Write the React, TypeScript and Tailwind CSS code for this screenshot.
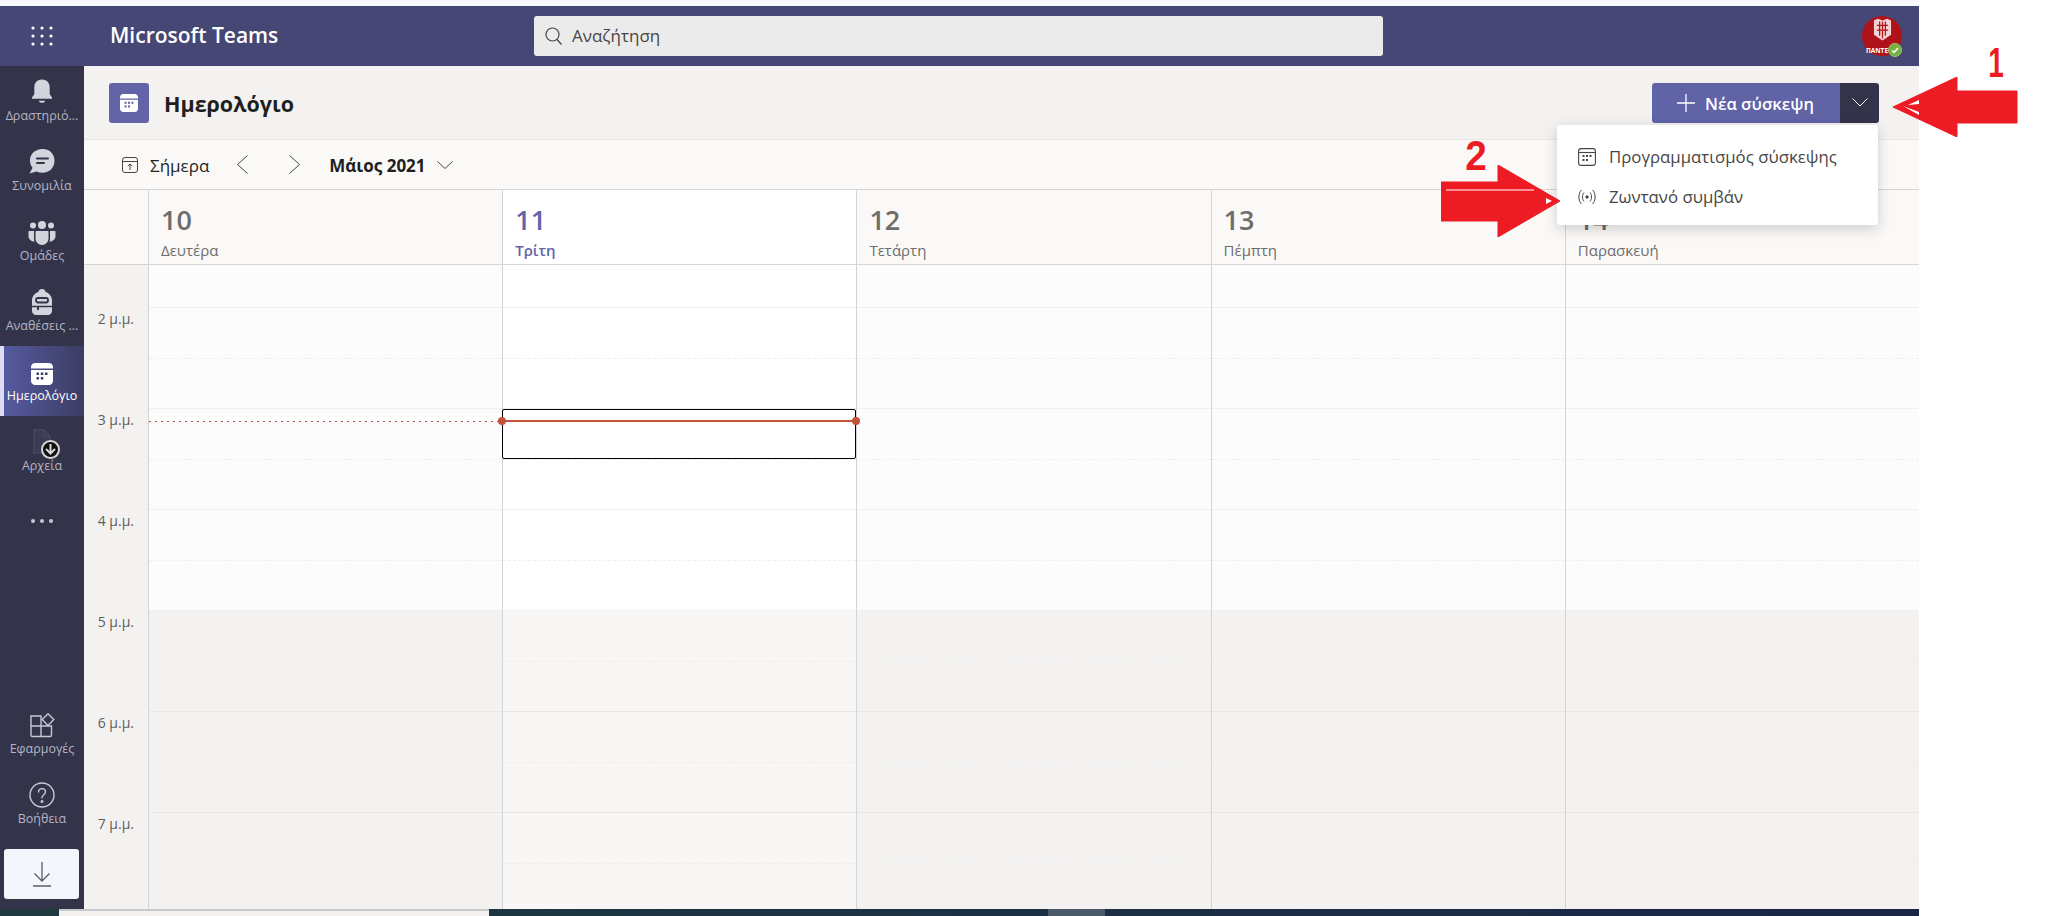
import React from "react";

// Half hour rows of the week grid, the first one is cut off by the day header
const ROWS = [0, 1, 2, 3, 4, 5, 6, 7, 8, 9, 10, 11, 12];
const HOURS = ["2 μ.μ.", "3 μ.μ.", "4 μ.μ.", "5 μ.μ.", "6 μ.μ.", "7 μ.μ."];
const DAYS = [
  { num: "10", name: "Δευτέρα" },
  { num: "11", name: "Τρίτη", today: true },
  { num: "12", name: "Τετάρτη" },
  { num: "13", name: "Πέμπτη" },
  { num: "14", name: "Παρασκευή" },
];

function BellIcon() {
  return (
    <svg width="22" height="27" viewBox="0 0 24 28" fill="#d4d4dc">
      <path d="M12 1C6 1 3.600 5 3.600 10v7L1 20.500V22h22v-1.500L20.400 17v-7C20.400 5 18 1 12 1z" />
      <path d="M8.500 24h7c-.6 1.600-2 2.400-3.500 2.400S9.100 25.600 8.500 24z" />
    </svg>
  );
}

function ChatIcon() {
  return (
    <svg width="28" height="27" viewBox="0 0 28 27">
      <path d="M14.500 1C7 1 2 6 2 12.500c0 2.800 1 5.300 2.500 7.200L1.500 25.500l7-2c1.800.8 3.800 1.200 6 1.200 7 0 12-5 12-12S21.500 1 14.500 1z" fill="#d4d4dc" />
      <path d="M9 10.500h11M9 15h7" stroke="#33344a" strokeWidth="2" strokeLinecap="round" />
    </svg>
  );
}

function TeamsIcon() {
  return (
    <svg width="28" height="24" viewBox="0 0 28 24" fill="#d4d4dc">
      <circle cx="14" cy="4" r="4" />
      <circle cx="5" cy="4.500" r="3" />
      <circle cx="23" cy="4.500" r="3" />
      <path d="M8.500 10h11c.5 0 1 .5 1 1v6.500c0 3.500-3 6.500-6.500 6.500s-6.500-3-6.500-6.500V11c0-.5.500-1 1-1z" />
      <path d="M1 10h5v8c0 1 .2 2 .5 2.800C3 20.500.5 18 .5 15v-4.500c0-.3.200-.5.500-.5zM27 10h-5v8c0 1-.2 2-.5 2.800 3.500-.3 6-2.800 6-5.800v-4.500c0-.3-.2-.5-.5-.5z" />
    </svg>
  );
}

function BackpackIcon() {
  return (
    <svg width="22" height="26" viewBox="0 0 22 26">
      <path d="M11 0c2 0 3.300 1.200 3.600 3C18.500 4.300 21 7.500 21 11.500V22c0 2.200-1.800 4-4 4H5c-2.200 0-4-1.800-4-4V11.500C1 7.500 3.500 4.300 7.400 3 7.700 1.200 9 0 11 0z" fill="#d4d4dc" />
      <rect x="5" y="9" width="12" height="4.500" rx="2" fill="none" stroke="#33344a" strokeWidth="1.800" />
      <path d="M1 17.500h20" stroke="#33344a" strokeWidth="1.500" />
      <path d="M7 17.500v3.500" stroke="#33344a" strokeWidth="2" />
    </svg>
  );
}

function CalendarFilled({ size, fill, dots }: { size: number; fill: string; dots: string }) {
  return (
    <svg width={size} height={size} viewBox="0 0 22 22">
      <path d="M4 0h14c2.200 0 4 1.800 4 4v1.500H0V4c0-2.200 1.800-4 4-4z" fill={fill} />
      <path d="M0 7h22v11c0 2.200-1.800 4-4 4H4c-2.200 0-4-1.800-4-4V7z" fill={fill} />
      <g fill={dots}>
        <rect x="5.500" y="9.500" width="2.500" height="2.500" />
        <rect x="9.800" y="9.500" width="2.500" height="2.500" />
        <rect x="14" y="9.500" width="2.500" height="2.500" />
        <rect x="5.500" y="14" width="2.500" height="2.500" />
        <rect x="9.800" y="14" width="2.500" height="2.500" />
      </g>
    </svg>
  );
}

function FilesIcon() {
  return (
    <div className="relative ml-[10px] w-[30px] h-[26px]">
      <svg width="20" height="25" viewBox="0 0 20 25" fill="none" stroke="#474860" strokeWidth="1.500">
        <path d="M2 1h10l6 6.500V24H2z" fill="#3b3c52" />
        <path d="M12 1v6.500h6" />
      </svg>
      <div className="absolute left-[9px] top-[11px] w-[19px] h-[19px] rounded-full bg-[#111] border-2 border-[#d8d8d8] flex items-center justify-center">
        <svg width="11" height="11" viewBox="0 0 11 11" fill="none" stroke="#d8d8d8" strokeWidth="2">
          <path d="M5.500 0v9M1 5l4.500 4.500L10 5" />
        </svg>
      </div>
    </div>
  );
}

function AppsIcon() {
  return (
    <svg width="25" height="25" viewBox="0 0 25 25" fill="none" stroke="#c8c8d2" strokeWidth="1.400">
      <path d="M1 3h10v10H1zM1 13v9c0 1 .5 1.500 1.500 1.500H11V13zM11 13h10.500v9c0 1-.5 1.500-1.500 1.500h-9z" />
      <path d="M18 .8l5.800 5.800-5.800 5.800-5.800-5.800z" />
    </svg>
  );
}

function HelpIcon() {
  return (
    <svg width="26" height="26" viewBox="0 0 26 26" fill="none" stroke="#c8c8d2" strokeWidth="1.400">
      <circle cx="13" cy="13" r="12" />
      <path d="M9.500 10c0-2 1.600-3.400 3.500-3.400s3.500 1.300 3.500 3.200c0 3-3.500 3-3.500 6" strokeLinecap="round" />
      <circle cx="13" cy="19.500" r=".8" fill="#c8c8d2" />
    </svg>
  );
}

function NavItem({ label, active, children }: { label: string; active?: boolean; children: React.ReactNode }) {
  return (
    <div
      className={
        active
          ? "h-[70px] flex flex-col items-center justify-end pb-[12px] gap-[3px] border-l-4 border-[#dcdcf5] pr-1 bg-gradient-to-r from-[#565aa0] to-[#3c3d62] text-white"
          : "h-[70px] flex flex-col items-center justify-end pb-[12px] gap-[3px] text-[#b4b4c2]"
      }
    >
      <div className="flex items-end justify-center h-[30px]">{children}</div>
      <span className="text-[12.5px] leading-[16px] whitespace-nowrap">{label}</span>
    </div>
  );
}

function Sidebar() {
  return (
    <aside className="w-[84px] shrink-0 bg-[#33344a] flex flex-col">
      <NavItem label="Δραστηριό..."><BellIcon /></NavItem>
      <NavItem label="Συνομιλία"><ChatIcon /></NavItem>
      <NavItem label="Ομάδες"><TeamsIcon /></NavItem>
      <NavItem label="Αναθέσεις ..."><BackpackIcon /></NavItem>
      <NavItem label="Ημερολόγιο" active><CalendarFilled size={22} fill="#ffffff" dots="#3c3d62" /></NavItem>
      <NavItem label="Αρχεία"><FilesIcon /></NavItem>
      <div className="h-[70px] flex justify-center pt-[33px] gap-[5px]">
        <span className="w-[4px] h-[4px] rounded-full bg-[#c8c8d2]" />
        <span className="w-[4px] h-[4px] rounded-full bg-[#c8c8d2]" />
        <span className="w-[4px] h-[4px] rounded-full bg-[#c8c8d2]" />
      </div>
      <div className="mt-auto">
        <NavItem label="Εφαρμογές"><AppsIcon /></NavItem>
        <NavItem label="Βοήθεια"><HelpIcon /></NavItem>
        <div className="mx-[4px] mt-[10px] mb-[10px] w-[75px] h-[50px] rounded-[3px] bg-[#f5f5fc] flex items-center justify-center">
          <svg width="20" height="26" viewBox="0 0 20 26" fill="none" stroke="#5c5c66" strokeWidth="1.300">
            <path d="M10 1v19M2.500 12.500L10 20l7.500-7.500M1 25h18" />
          </svg>
        </div>
      </div>
    </aside>
  );
}

function TopBar() {
  return (
    <header className="h-[60px] shrink-0 bg-[#464775] flex items-center">
      <div className="w-[84px] h-full flex items-center justify-center">
        <svg width="22" height="20" viewBox="0 0 22 20" fill="#ffffff">
          {[2, 11, 20].map((x) =>
            [2, 10, 18].map((y) => <circle key={`${x}-${y}`} cx={x} cy={y} r="1.600" />)
          )}
        </svg>
      </div>
      <span className="ml-[26px] w-[424px] text-[21px] font-semibold text-white">Microsoft Teams</span>
      <div className="w-[849px] h-[40px] rounded-[3px] bg-[#ebebeb] flex items-center pl-[11px] gap-[10px] text-[17px] text-[#484644]">
        <svg width="17" height="18" viewBox="0 0 17 18" fill="none" stroke="#484644" strokeWidth="1.200">
          <circle cx="7.500" cy="7.500" r="6.500" />
          <path d="M12 12.500l4.500 5" />
        </svg>
        <span>Αναζήτηση</span>
      </div>
      <div className="ml-auto mr-[17px] relative w-[40px] h-[40px] rounded-full bg-[#b01219] flex flex-col items-center">
        <svg width="19" height="27" viewBox="0 0 20 25" className="mt-[1px]">
          <path d="M1 2l4-2 5 2 5-2 4 2v15l-9 6-9-6z" fill="#f3d4d4" />
          <path d="M4 7h12M4 12h12M7 3v15M13 3v15M10 3v18" stroke="#b01219" strokeWidth="1.300" />
        </svg>
        <span className="absolute left-[4px] top-[30px] text-[6.5px] leading-[9px] font-bold text-white">ΠΑΝΤΕ</span>
        <div className="absolute left-[26px] top-[27px] w-[14px] h-[14px] rounded-full bg-[#76b041] border border-[#9ac76b] flex items-center justify-center">
          <svg width="8" height="7" viewBox="0 0 8 7" fill="none" stroke="#fff" strokeWidth="1.500">
            <path d="M1 3.500L3 5.500 7 1" />
          </svg>
        </div>
      </div>
    </header>
  );
}

function PageHeader() {
  return (
    <div className="h-[74px] shrink-0 bg-[#f3f2f1] border-b border-[#e8e7e6] flex items-center pl-[25px] pr-[40px]">
      <div className="w-[40px] h-[40px] rounded-[3px] bg-[#6264a7] flex items-center justify-center">
        <CalendarFilled size={18} fill="#ffffff" dots="#6264a7" />
      </div>
      <h1 className="ml-[15px] pt-[3px] text-[21.5px] font-bold text-[#201f1e]">Ημερολόγιο</h1>
      <div className="ml-auto flex h-[40px] rounded-[3px] overflow-hidden">
        <div className="w-[188px] bg-[#6063a6] flex items-center pl-[25px] gap-[10px] text-white">
          <svg width="18" height="18" viewBox="0 0 18 18" stroke="#fff" strokeWidth="1.300">
            <path d="M9 0v18M0 9h18" />
          </svg>
          <span className="pt-[3px] text-[16.5px] font-semibold">Νέα σύσκεψη</span>
        </div>
        <div className="w-[39px] bg-[#33344a] flex items-center justify-center">
          <svg width="16" height="9" viewBox="0 0 16 9" fill="none" stroke="#fff" strokeWidth="1">
            <path d="M.5.500L8 8l7.500-7.500" />
          </svg>
        </div>
      </div>
    </div>
  );
}

function Toolbar() {
  return (
    <div className="h-[50px] shrink-0 bg-[#faf9f8] border-b border-[#d6d5d4] flex items-center pl-[38px] text-[#252423]">
      <svg width="16" height="16" viewBox="0 0 16 16" fill="none" stroke="#484644" strokeWidth="1">
        <rect x=".5" y=".5" width="15" height="15" rx="2.500" />
        <path d="M.5 4.500h15M8 13V7M5.800 9L8 7l2.200 2" />
      </svg>
      <span className="ml-[12px] pt-[3px] text-[17px]">Σήμερα</span>
      <svg className="ml-[28px]" width="11" height="19" viewBox="0 0 11 19" fill="none" stroke="#484644" strokeWidth="1">
        <path d="M10.500.5l-10 9 10 9" />
      </svg>
      <svg className="ml-[41px]" width="11" height="19" viewBox="0 0 11 19" fill="none" stroke="#484644" strokeWidth="1">
        <path d="M.5.5l10 9-10 9" />
      </svg>
      <span className="ml-[29px] pt-[3px] text-[17px] font-bold text-[#201f1e]">Μάιος 2021</span>
      <svg className="ml-[11px]" width="16" height="8" viewBox="0 0 16 8" fill="none" stroke="#484644" strokeWidth="1">
        <path d="M.5.5L8 7.500 15.500.5" />
      </svg>
    </div>
  );
}

function DayColumn({ index, num, name, today }: { index: number; num: string; name: string; today?: boolean }) {
  return (
    <div className="flex-1 min-w-0 flex flex-col border-l border-[#d4d4d4]">
      <div className={today ? "h-[75px] shrink-0 bg-white border-b border-[#d6d5d4] pl-[12px] pt-[12px]" : "h-[75px] shrink-0 bg-[#faf9f8] border-b border-[#d6d5d4] pl-[12px] pt-[12px]"}>
        <div className={today ? "text-[27px] leading-[36px] font-semibold text-[#6264a7]" : "text-[27px] leading-[36px] font-semibold text-[#6e6d6c]"}>{num}</div>
        <div className={today ? "mt-[2px] text-[15px] leading-[20px] font-semibold text-[#6264a7]" : "mt-[2px] text-[15px] leading-[20px] text-[#6e6d6c]"}>{name}</div>
      </div>
      <div className="relative flex-1 min-h-0">
        {ROWS.map((row) => {
          const off = row >= 7;
          const solid = row % 2 === 0;
          let cls = today ? "bg-white " : "bg-[#fdfcfc] ";
          if (off) cls = today ? "bg-[#f8f7f6] " : "bg-[#f3f2f1] ";
          cls += row === 0 ? "h-[43px] " : "h-[50.5px] ";
          if (solid) cls += off ? "border-b border-[#e9e8e7]" : "border-b border-[#f0efee]";
          else cls += off ? "border-b border-dashed border-[#eeedec]" : "border-b border-dashed border-[#f0efee]";
          return <div key={row} className={cls} />;
        })}
        {index === 0 && (
          <div className="absolute left-0 right-0 top-[156px] h-px bg-[repeating-linear-gradient(90deg,#b5533c_0_2px,transparent_2px_6px)]" />
        )}
        {today && (
          <div className="absolute z-10 -left-px right-0 top-[144px] h-[50px] rounded-[2px] border-[1.5px] border-black">
            <div className="mt-[10px] h-[2px] bg-[#c4513a]" />
            <span className="absolute -left-[5px] top-[7px] w-[8px] h-[8px] rounded-full bg-[#c4513a]" />
            <span className="absolute -right-[5px] top-[7px] w-[8px] h-[8px] rounded-full bg-[#c4513a]" />
          </div>
        )}
      </div>
    </div>
  );
}

function WeekGrid() {
  return (
    <div className="flex-1 min-h-0 flex overflow-hidden">
      <div className="w-[64px] shrink-0 flex flex-col">
        <div className="h-[75px] shrink-0 bg-[#faf9f8] border-b border-[#d6d5d4]" />
        <div className="flex-1 bg-[#f3f2f1] pt-[43px] pr-[14px] text-right text-[14px] text-[#605e5c]">
          {HOURS.map((hour) => (
            <div key={hour} className="h-[101px] pt-[1px] leading-[20px]">{hour}</div>
          ))}
        </div>
      </div>
      {DAYS.map((day, i) => (
        <DayColumn key={day.num} index={i} num={day.num} name={day.name} today={day.today} />
      ))}
    </div>
  );
}

function NewMeetingMenu() {
  return (
    <div className="absolute z-20 left-[1557px] top-[125px] w-[321px] h-[100px] rounded-[3px] bg-white shadow-[0_4px_14px_rgba(0,0,0,0.18)] flex flex-col pt-[12px] text-[16.8px] text-[#484644]">
      <div className="h-[40px] flex items-center pl-[21px] gap-[13px]">
        <svg width="18" height="18" viewBox="0 0 18 18" fill="none" stroke="#484644" strokeWidth="1.100">
          <rect x=".6" y=".6" width="16.800" height="16.800" rx="2.500" />
          <path d="M.6 4.500h16.800" />
          <path d="M4.500 8h2M8 8h2M11.500 8h2M4.500 12h2M8 12h2" strokeWidth="1.800" />
        </svg>
        <span>Προγραμματισμός σύσκεψης</span>
      </div>
      <div className="h-[40px] flex items-center pl-[20px] gap-[12px]">
        <svg width="20" height="16" viewBox="0 0 20 16" fill="none" stroke="#484644" strokeWidth="1">
          <path d="M4.500 1C1 4.500 1 11.500 4.500 15M7 3.500c-2 2.500-2 6.500 0 9M15.500 1c3.500 3.500 3.500 10.500 0 14M13 3.500c2 2.500 2 6.500 0 9" />
          <circle cx="10" cy="8" r="1.200" fill="#484644" />
        </svg>
        <span>Ζωντανό συμβάν</span>
      </div>
    </div>
  );
}

function RedArrows() {
  return (
    <>
      <svg className="absolute z-30 left-[1893px] top-[77px]" width="125" height="60" viewBox="0 0 125 60">
        <path d="M0 30L64 0v14h60v32H64v14z" fill="#ed1c24" stroke="#ed1c24" strokeLinejoin="round" />
        <path d="M15 28l11-5v4zM10 29l16 6v3z" fill="#ffffff" />
      </svg>
      <svg className="absolute z-30 left-[1441px] top-[165px]" width="120" height="72" viewBox="0 0 120 72">
        <path d="M0 17h57V0l62 36-62 36V56H0z" fill="#ed1c24" stroke="#ed1c24" strokeLinejoin="round" />
        <path d="M5 25h88" stroke="#ffffff" strokeWidth="1" />
        <path d="M105 33l6 3-6 3z" fill="#ffffff" />
      </svg>
      <span className="absolute z-30 left-[1984px] top-[40px] text-[43px] leading-[45px] font-bold text-[#ed1c24] font-['Liberation_Sans',sans-serif] scale-x-[.65]">1</span>
      <span className="absolute z-30 left-[1464px] top-[133px] text-[43px] leading-[45px] font-bold text-[#ed1c24] font-['Liberation_Sans',sans-serif] scale-x-90">2</span>
    </>
  );
}

export default function App() {
  return (
    <div className="relative w-[2050px] h-[916px] overflow-hidden bg-white font-['Open_Sans','Noto_Sans',sans-serif]">
      <div className="w-[1919px] h-full flex flex-col">
        <div className="h-[6px] shrink-0 bg-[#f8f8fd]" />
        <TopBar />
        <div className="flex-1 min-h-0 flex">
          <Sidebar />
          <main className="flex-1 min-w-0 flex flex-col">
            <PageHeader />
            <Toolbar />
            <WeekGrid />
          </main>
        </div>
        {/* taskbar sliver at the bottom of the capture */}
        <div className="h-[7px] shrink-0 flex bg-gradient-to-r from-[#1f3b3f] to-[#1a2547]">
          <div className="ml-[59px] w-[430px] bg-[#f3f2f1] border-t-2 border-[#c8c8c8]" />
          <div className="ml-[559px] w-[57px] bg-[#4a5a68]" />
        </div>
      </div>
      <NewMeetingMenu />
      <RedArrows />
    </div>
  );
}
